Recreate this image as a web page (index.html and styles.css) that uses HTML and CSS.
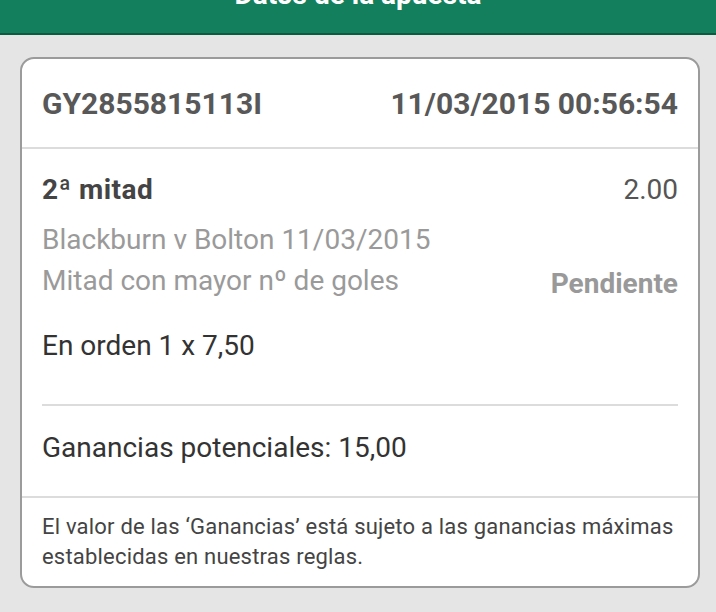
FILE: index.html
```html
<!DOCTYPE html>
<html lang="es">
<head>
    <meta charset="UTF-8">
    <meta name="viewport" content="width=device-width, initial-scale=1.0">
    <title>Datos de la apuesta</title>
    <link rel="stylesheet" href="styles.css">
</head>
<body>
    <div class="topbar">
        <h1>Datos de la apuesta</h1>
    </div>

    <div class="card">
        <div class="card-head">
            <span>GY2855815113I</span>
            <span>11/03/2015 00:56:54</span>
        </div>

        <div class="selection">
            <div class="row first">
                <span class="market">2ª mitad</span>
                <span class="odds">2.00</span>
            </div>
            <div class="row event">Blackburn v Bolton 11/03/2015</div>
            <div class="row bet-type">
                <span>Mitad con mayor nº de goles</span>
                <span class="status">Pendiente</span>
            </div>
            <div class="row stake">En orden 1 x 7,50</div>

            <div class="divider"></div>

            <div class="row winnings">Ganancias potenciales: 15,00</div>
        </div>

        <div class="note">
            El valor de las ‘Ganancias’ está sujeto a las ganancias máximas establecidas en nuestras reglas.
        </div>
    </div>
</body>
</html>
```

FILE: styles.css
```css
body {
    margin: 0;
    font-family: Roboto, "Liberation Sans", Arial, sans-serif;
    background-color: #e5e5e5;
    width: 716px;
    height: 612px;
    overflow: hidden;
}

.topbar {
    height: 33px;
    background-color: #137f5c;
    border-bottom: 2px solid #0b5b40;
    overflow: hidden;
}

.topbar h1 {
    margin: -22px 0 0;
    line-height: 34px;
    font-size: 28px;
    font-weight: bold;
    color: #ffffff;
    text-align: center;
}

.card {
    margin: 22px 16px 0 20px;
    background-color: #ffffff;
    border: 2px solid #9b9b9b;
    border-radius: 14px;
    overflow: hidden;
}

.card-head {
    display: flex;
    justify-content: space-between;
    align-items: center;
    height: 88px;
    padding: 0 20px;
    border-bottom: 2px solid #dcdcdc;
    font-size: 30px;
    font-weight: bold;
    color: #585858;
}

.selection {
    padding: 21px 20px 28px;
    border-bottom: 2px solid #dcdcdc;
}

.row {
    display: flex;
    justify-content: space-between;
    align-items: baseline;
    font-size: 28px;
    line-height: 40px;
}

.market {
    font-weight: bold;
    color: #444;
    letter-spacing: 0.5px;
}

.odds {
    color: #555;
}

.event {
    margin-top: 10px;
    color: #9a9a9a;
}

.bet-type {
    margin-top: 1px;
    color: #9a9a9a;
}

.status {
    font-weight: bold;
    color: #999;
    position: relative;
    top: 3px;
}

.stake {
    margin-top: 25px;
    color: #333;
}

.divider {
    margin-top: 38px;
    height: 2px;
    background-color: #dcdcdc;
}

.winnings {
    margin-top: 22px;
    color: #333;
}

.note {
    padding: 14px 20px 14px;
    font-size: 22px;
    line-height: 30px;
    color: #444;
    letter-spacing: 0.2px;
}
```
